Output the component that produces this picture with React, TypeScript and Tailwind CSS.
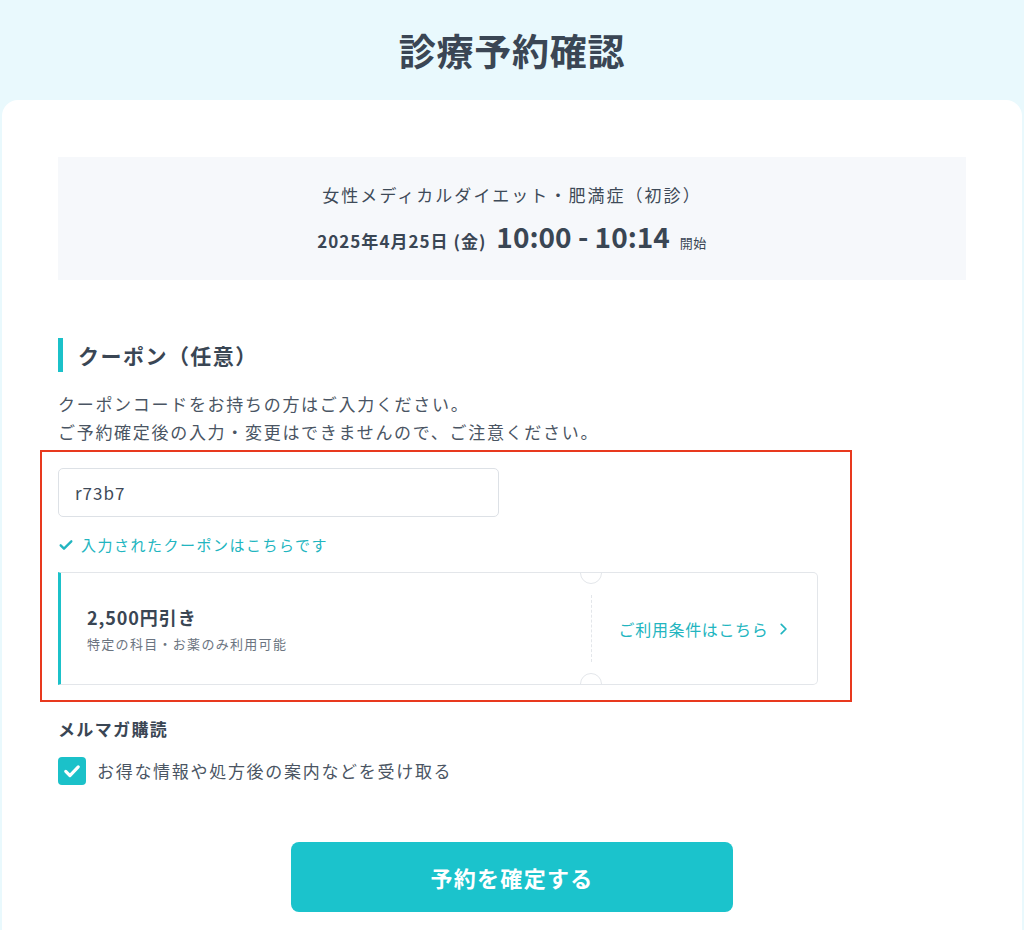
import React from "react";

const font = { fontFamily: '"Noto Sans CJK JP", "Noto Sans", sans-serif' };

export default function App() {
  return (
    <div className="min-h-[930px] w-full bg-[#e9f9fd] text-[#3c4856]" style={font}>
      <div className="h-[100px] flex items-center justify-center">
        <h1 className="text-[37px] font-bold tracking-[0.02em] text-[#3a4654] leading-none">診療予約確認</h1>
      </div>
      <div className="mx-[2px] bg-white rounded-t-[16px] px-[56px] pt-[57px] pb-[18px]">
        {/* summary */}
        <div className="h-[123px] bg-[#f6f8fb] flex flex-col items-center justify-center">
          <div className="text-[17px] leading-[24px] tracking-[0.12em] text-[#3e4a58]">女性メディカルダイエット・肥満症（初診）</div>
          <div className="mt-[13px] flex items-baseline text-[#3a4654]">
            <span className="text-[17px] font-bold tracking-[0.06em]">2025年4月25日 (金)</span>
            <span className="ml-[10px] text-[28px] font-bold leading-[32px]">10:00 - 10:14</span>
            <span className="ml-[10px] text-[13px] tracking-[0.04em]">開始</span>
          </div>
        </div>

        {/* heading */}
        <div className="mt-[58px] h-[34px] flex items-center border-l-[5px] border-[#1bc1c9] pl-[15px]">
          <h2 className="text-[21px] font-bold tracking-[0.07em] text-[#3a4654] leading-none">クーポン（任意）</h2>
        </div>
        <p className="mt-[18px] text-[17px] leading-[28px] tracking-[0.1em] text-[#4a5563]">
          クーポンコードをお持ちの方はご入力ください。
          <br />
          ご予約確定後の入力・変更はできませんので、ご注意ください。
        </p>

        {/* annotated box */}
        <div className="mt-[4px] ml-[-18px] w-[812px] border-2 border-[#e8391e] pl-[16px] pr-[32px] pt-[16px] pb-[15px]">
          <div className="w-[441px] h-[49px] border border-[#dde1e6] rounded-[5px] flex items-center px-[16px] text-[17px] tracking-[0.06em] text-[#3e4a58]">
            r73b7
          </div>
          <div className="mt-[16px] flex items-center gap-[7px] text-[15px] tracking-[0.1em] text-[#22b5c0] leading-[24px]">
            <svg width="16" height="16" viewBox="0 0 24 24" fill="none" stroke="#22b5c0" strokeWidth="3.5" strokeLinecap="round" strokeLinejoin="round">
              <path d="M4 12.5l5 5L20 6.5" />
            </svg>
            <span>入力されたクーポンはこちらです</span>
          </div>
          <div className="mt-[15px] relative h-[113px] flex border border-[#e3e6ea] border-l-[3px] border-l-[#1bc1c9] rounded-r-[5px]">
            <div className="flex-1 flex flex-col justify-center pl-[26px]">
              <div className="text-[18px] font-bold tracking-[0.05em] text-[#3a4654] leading-[26px]">2,500円引き</div>
              <div className="mt-[4px] text-[13px] tracking-[0.1em] text-[#6b7480] leading-[20px]">特定の科目・お薬のみ利用可能</div>
            </div>
            <div className="w-[226px] flex items-center justify-center border-l border-dashed border-[#e3e6ea] my-[22px]">
              <span className="flex items-center gap-[8px] text-[16px] tracking-[0.04em] text-[#22b5c0]">
                ご利用条件はこちら
                <svg width="14" height="14" viewBox="0 0 24 24" fill="none" stroke="#22b5c0" strokeWidth="3" strokeLinecap="round" strokeLinejoin="round">
                  <path d="M9 4l8 8-8 8" />
                </svg>
              </span>
            </div>
            <div className="absolute left-[519px] top-[-11px] w-[22px] h-[22px] rounded-full bg-white border border-[#e3e6ea]" style={{ clipPath: "inset(11px 0 0 0)" }} />
            <div className="absolute left-[519px] bottom-[-11px] w-[22px] h-[22px] rounded-full bg-white border border-[#e3e6ea]" style={{ clipPath: "inset(0 0 11px 0)" }} />
          </div>
        </div>

        {/* mail magazine */}
        <div className="mt-[15px] text-[17px] font-bold tracking-[0.08em] text-[#3a4654] leading-[24px]">メルマガ購読</div>
        <label className="mt-[16px] flex items-center gap-[11px]">
          <span className="w-[28px] h-[28px] rounded-[4px] bg-[#1bc1c9] flex items-center justify-center">
            <svg width="20" height="20" viewBox="0 0 24 24" fill="none" stroke="white" strokeWidth="3.8" strokeLinecap="round" strokeLinejoin="round">
              <path d="M4.5 12.5l5 5L19.5 7" />
            </svg>
          </span>
          <span className="text-[17px] tracking-[0.1em] text-[#4a5563]">お得な情報や処方後の案内などを受け取る</span>
        </label>

        <div className="mt-[57px] flex justify-center">
          <button className="w-[442px] h-[70px] rounded-[8px] bg-[#1bc3cc] text-white text-[22px] font-bold tracking-[0.06em]">
            予約を確定する
          </button>
        </div>
      </div>
    </div>
  );
}
